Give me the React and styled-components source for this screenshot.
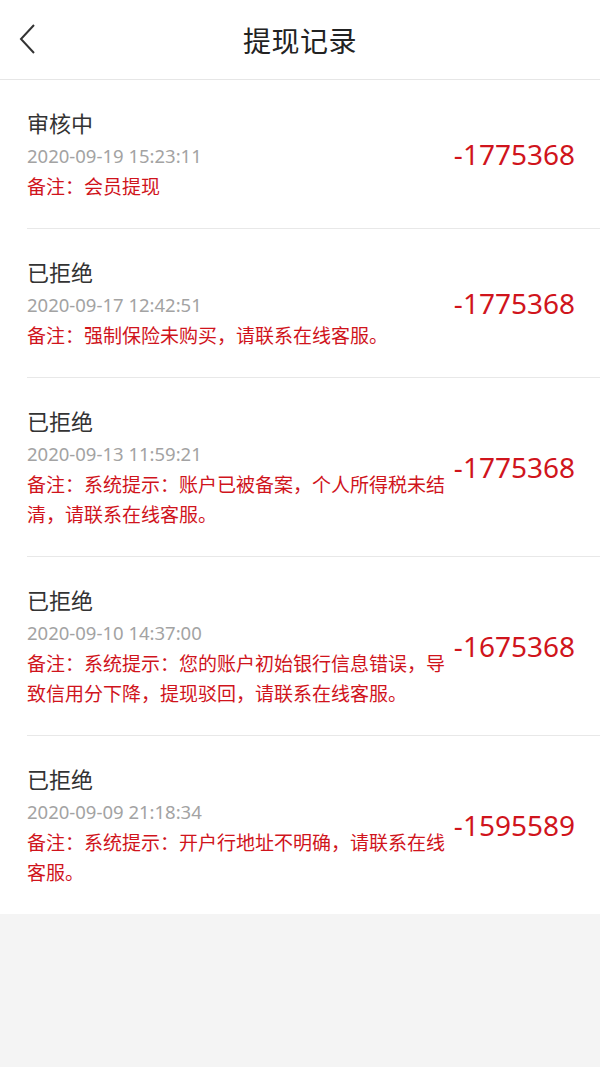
import React from 'react'
import styled, { createGlobalStyle } from 'styled-components'

const GlobalStyle = createGlobalStyle`
  html, body {
    margin: 0;
    padding: 0;
    background: #f4f4f4;
    font-family: "Noto Sans", "Noto Sans CJK SC", sans-serif;
  }
`

const Page = styled.div`
  width: 600px;
  min-height: 1067px;
  background: #f4f4f4;
`

const Header = styled.div`
  height: 79px;
  background: #fff;
  border-bottom: 1px solid #e6e6e6;
  display: flex;
  align-items: center;
  justify-content: center;
  position: relative;
`

const Back = styled.div`
  position: absolute;
  left: 16px;
  top: 22px;
  width: 24px;
  height: 34px;
`

const Title = styled.div`
  font-size: 28px;
  color: #222;
  letter-spacing: 0.5px;
`

const List = styled.div`
  background: #fff;
  padding-left: 27px;
`

const Item = styled.div`
  display: flex;
  align-items: center;
  padding: 26px 25px 26px 0;
  border-top: ${p => (p.first ? 'none' : '1px solid #e8e8e8')};
`

const Info = styled.div`
  flex: 1;
  min-width: 0;
`

const Status = styled.div`
  font-size: 22px;
  line-height: 34px;
  color: #333;
`

const Time = styled.div`
  font-size: 18.5px;
  line-height: 32px;
  color: #a3a3a3;
`

const Note = styled.div`
  font-size: 19px;
  line-height: 30px;
  color: #d0141c;
  padding-right: 2px;
`

const Amount = styled.div`
  font-size: 28px;
  color: #d0141c;
  white-space: nowrap;
`

const records = [
  { status: '审核中', time: '2020-09-19 15:23:11', note: '会员提现', amount: '-1775368' },
  { status: '已拒绝', time: '2020-09-17 12:42:51', note: '强制保险未购买，请联系在线客服。', amount: '-1775368' },
  { status: '已拒绝', time: '2020-09-13 11:59:21', note: '系统提示：账户已被备案，个人所得税未结清，请联系在线客服。', amount: '-1775368' },
  { status: '已拒绝', time: '2020-09-10 14:37:00', note: '系统提示：您的账户初始银行信息错误，导致信用分下降，提现驳回，请联系在线客服。', amount: '-1675368' },
  { status: '已拒绝', time: '2020-09-09 21:18:34', note: '系统提示：开户行地址不明确，请联系在线客服。', amount: '-1595589' },
]

const App = () => {
  return (
    <>
      <GlobalStyle />
      <Page>
        <Header>
          <Back>
            <svg width="24" height="34" viewBox="0 0 24 34">
              <polyline points="18,3 5,17 18,31" fill="none" stroke="#333" strokeWidth="2" />
            </svg>
          </Back>
          <Title>提现记录</Title>
        </Header>
        <List>
          {records.map((r, i) => (
            <Item key={i} first={i === 0}>
              <Info>
                <Status>{r.status}</Status>
                <Time>{r.time}</Time>
                <Note>{`备注：${r.note}`}</Note>
              </Info>
              <Amount>{r.amount}</Amount>
            </Item>
          ))}
        </List>
      </Page>
    </>
  )
}

export default App
